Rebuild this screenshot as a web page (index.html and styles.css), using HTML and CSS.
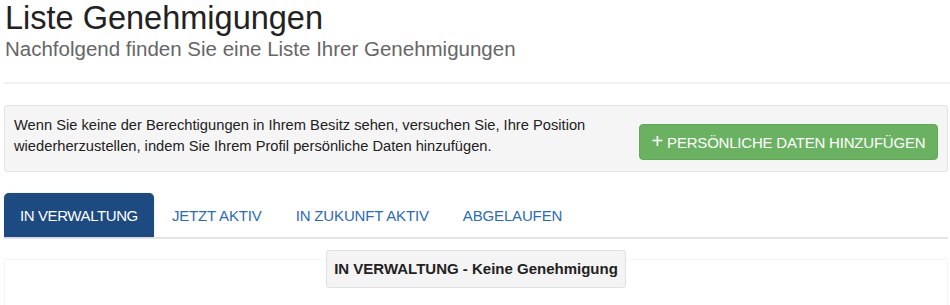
FILE: index.html
```html
<!DOCTYPE html>
<html lang="de">
<head>
<meta charset="utf-8">
<title>Liste Genehmigungen</title>
<link rel="stylesheet" href="styles.css">
</head>
<body>
<div class="page">
  <header class="page-header">
    <h1 class="title">Liste Genehmigungen</h1>
    <p class="subtitle">Nachfolgend finden Sie eine Liste Ihrer Genehmigungen</p>
  </header>
  <div class="well">
    <p class="well-text">Wenn Sie keine der Berechtigungen in Ihrem Besitz sehen, versuchen Sie, Ihre Position wiederherzustellen, indem Sie Ihrem Profil persönliche Daten hinzufügen.</p>
    <button class="btn-add" type="button"><span class="plus">+</span> PERSÖNLICHE DATEN HINZUFÜGEN</button>
  </div>
  <nav class="tabs">
    <a class="tab active">IN VERWALTUNG</a>
    <a class="tab">JETZT AKTIV</a>
    <a class="tab">IN ZUKUNFT AKTIV</a>
    <a class="tab">ABGELAUFEN</a>
  </nav>
  <section class="tab-content">
    <div class="empty">IN VERWALTUNG - Keine Genehmigung</div>
    <div class="panel"></div>
  </section>
</div>
</body>
</html>
```
FILE: styles.css
```css
* { box-sizing: border-box; }
html, body { margin: 0; padding: 0; background: #fff; }
body {
  font-family: "Liberation Sans", Arial, Helvetica, sans-serif;
  color: #333;
  width: 950px;
  height: 305px;
  overflow: hidden;
}
.page {
  padding: 0 2px 0 4px;
}
.page-header {
  padding-left: 1px;
  padding-bottom: 21px;
  border-bottom: 2px solid #f0f0f0;
  margin-right: -2px;
}
.title {
  margin: 0;
  font-size: 32.5px;
  line-height: 37px;
  font-weight: normal;
  color: #222;
}
.subtitle {
  margin: 0;
  font-size: 20.5px;
  line-height: 24px;
  color: #666;
}
.well {
  margin-top: 21px;
  background: #f5f5f5;
  border: 1px solid #e3e3e3;
  border-radius: 3px;
  padding: 9px 9px 11px 9px;
  display: flex;
  justify-content: space-between;
  align-items: flex-start;
}
.well-text {
  margin: 0;
  font-size: 14.7px;
  line-height: 21px;
  color: #222;
  width: 610px;
}
.btn-add {
  margin-top: 9px;
  width: 299px;
  height: 36px;
  background: #6bb162;
  border: 1px solid #62a859;
  border-radius: 4px;
  color: #fff;
  font-family: "Liberation Sans", Arial, sans-serif;
  font-size: 15px;
  letter-spacing: -0.2px;
  padding: 0;
  display: flex;
  align-items: center;
  justify-content: center;
}
.plus {
  font-size: 20px;
  line-height: 1;
  margin-right: 4px;
  position: relative;
  top: -1px;
}
.tabs {
  margin-top: 21px;
  display: flex;
  border-bottom: 2px solid #e4e4e4;
  gap: 2px;
}
.tab {
  display: block;
  padding: 0 16px;
  height: 44px;
  line-height: 46px;
  font-size: 15px;
  letter-spacing: -0.15px;
  color: #2c6cb3;
  text-decoration: none;
}
.tab.active {
  background: #1d4a80;
  color: #fff;
  letter-spacing: -0.4px;
  border-radius: 5px 5px 0 0;
  box-shadow: 0 0 1px rgba(0,0,0,0.4);
}
.tab-content {
  margin-top: 11px;
  display: flex;
  flex-direction: column;
  align-items: center;
}
.empty {
  position: relative;
  z-index: 1;
  background: #f4f4f4;
  border: 1px solid #e0e0e0;
  border-radius: 3px;
  width: 300px;
  height: 38px;
  line-height: 36px;
  text-align: center;
  font-weight: bold;
  font-size: 15px;
  color: #222;
}
.panel {
  align-self: stretch;
  margin-top: -29px;
  height: 60px;
  border: 1px solid #f6f6f6;
  border-bottom: none;
}
```
